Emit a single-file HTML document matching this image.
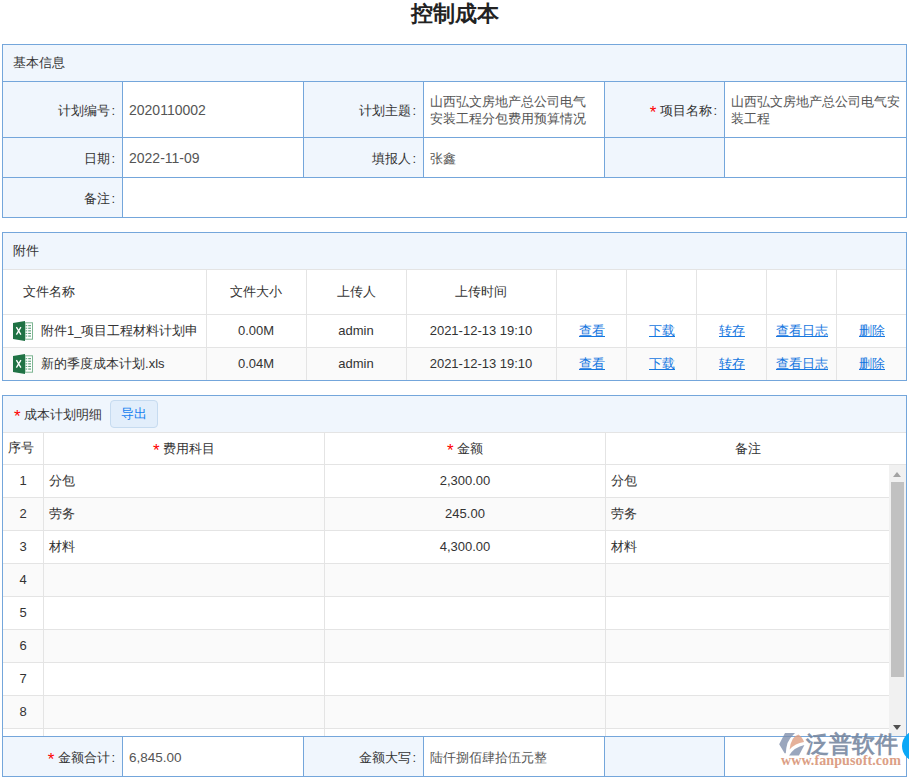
<!DOCTYPE html>
<html><head><meta charset="utf-8"><style>
html,body{margin:0;padding:0;background:#fff;}
body{width:909px;height:777px;position:relative;overflow:hidden;font-family:"Liberation Sans",sans-serif;font-size:13px;}
.a{position:absolute;}
.t{position:absolute;white-space:nowrap;line-height:17px;color:#333;}
.n{font-size:14px;}
.p2 .n{font-size:13px;}
.ft .n{font-size:13.5px;}
.co{margin-left:1.5px;}
.val{color:#555;}
.ml{line-height:17px;}
.st{color:#f00;font-size:17px;position:relative;top:3px;line-height:0;}
.title{font-size:22px;font-weight:bold;color:#222;line-height:26px;}
.lnk{color:#1677e0;text-decoration:underline;}
.btn{background:#e2eefb;border:1px solid #c6dbf0;border-radius:4px;box-sizing:border-box;}
.bt{color:#1480f0;}
.wm{opacity:.88;font-size:23px;color:#75869f;line-height:30px;font-weight:bold;}
.wmu{font-family:"Liberation Serif",serif;font-size:12.6px;color:#dc9f86;line-height:16px;letter-spacing:0.1px;font-weight:bold;}
</style></head>
<body>
<div class="t title" style="left:0px;width:909px;text-align:center;top:1px;">控制成本</div>
<div class="a" style="left:2px;top:44px;width:905px;height:174px;background:#fff;"></div>
<div class="a" style="left:2px;top:44px;width:905px;height:37px;background:#f0f6fd;"></div>
<div class="a" style="left:2px;top:81px;width:120px;height:56px;background:#f0f6fd;"></div>
<div class="a" style="left:303px;top:81px;width:120px;height:56px;background:#f0f6fd;"></div>
<div class="a" style="left:604px;top:81px;width:120px;height:56px;background:#f0f6fd;"></div>
<div class="a" style="left:2px;top:137px;width:120px;height:40px;background:#f0f6fd;"></div>
<div class="a" style="left:303px;top:137px;width:120px;height:40px;background:#f0f6fd;"></div>
<div class="a" style="left:604px;top:137px;width:120px;height:40px;background:#f0f6fd;"></div>
<div class="a" style="left:2px;top:177px;width:120px;height:40px;background:#f0f6fd;"></div>
<div class="a" style="left:2px;top:44px;width:905px;height:1px;background:#74a6db;"></div>
<div class="a" style="left:2px;top:81px;width:905px;height:1px;background:#74a6db;"></div>
<div class="a" style="left:2px;top:137px;width:905px;height:1px;background:#74a6db;"></div>
<div class="a" style="left:2px;top:177px;width:905px;height:1px;background:#74a6db;"></div>
<div class="a" style="left:2px;top:217px;width:905px;height:1px;background:#74a6db;"></div>
<div class="a" style="left:2px;top:44px;width:1px;height:174px;background:#74a6db;"></div>
<div class="a" style="left:906px;top:44px;width:1px;height:174px;background:#74a6db;"></div>
<div class="a" style="left:122px;top:81px;width:1px;height:97px;background:#74a6db;"></div>
<div class="a" style="left:303px;top:81px;width:1px;height:97px;background:#74a6db;"></div>
<div class="a" style="left:423px;top:81px;width:1px;height:97px;background:#74a6db;"></div>
<div class="a" style="left:604px;top:81px;width:1px;height:97px;background:#74a6db;"></div>
<div class="a" style="left:724px;top:81px;width:1px;height:97px;background:#74a6db;"></div>
<div class="a" style="left:122px;top:177px;width:1px;height:41px;background:#74a6db;"></div>
<div class="t lbl" style="left:13px;top:54px;">基本信息</div>
<div class="t lbl" style="right:794px;top:102px;">计划编号<span class="co">:</span></div>
<div class="t val" style="left:129px;top:102px;"><span class="n">2020110002</span></div>
<div class="t lbl" style="right:493px;top:102px;">计划主题<span class="co">:</span></div>
<div class="t val ml" style="left:430px;top:93px;">山西弘文房地产总公司电气<br>安装工程分包费用预算情况</div>
<div class="t lbl" style="right:192px;top:102px;"><span class="st">*</span> 项目名称<span class="co">:</span></div>
<div class="t val ml" style="left:731px;top:93px;">山西弘文房地产总公司电气安<br>装工程</div>
<div class="t lbl" style="right:794px;top:150px;">日期<span class="co">:</span></div>
<div class="t val" style="left:129px;top:150px;"><span class="n">2022-11-09</span></div>
<div class="t lbl" style="right:493px;top:150px;">填报人<span class="co">:</span></div>
<div class="t val" style="left:430px;top:150px;">张鑫</div>
<div class="t lbl" style="right:794px;top:190px;">备注<span class="co">:</span></div>
<div class="a" style="left:2px;top:232px;width:905px;height:149px;background:#fff;"></div>
<div class="a" style="left:2px;top:232px;width:905px;height:37px;background:#f0f6fd;"></div>
<div class="a" style="left:3px;top:347px;width:903px;height:33px;background:#fafafa;"></div>
<div class="a" style="left:3px;top:269px;width:903px;height:1px;background:#e4e4e4;"></div>
<div class="a" style="left:3px;top:314px;width:903px;height:1px;background:#e4e4e4;"></div>
<div class="a" style="left:3px;top:347px;width:903px;height:1px;background:#e4e4e4;"></div>
<div class="a" style="left:206px;top:270px;width:1px;height:110px;background:#e4e4e4;"></div>
<div class="a" style="left:306px;top:270px;width:1px;height:110px;background:#e4e4e4;"></div>
<div class="a" style="left:406px;top:270px;width:1px;height:110px;background:#e4e4e4;"></div>
<div class="a" style="left:556px;top:270px;width:1px;height:110px;background:#e4e4e4;"></div>
<div class="a" style="left:626px;top:270px;width:1px;height:110px;background:#e4e4e4;"></div>
<div class="a" style="left:696px;top:270px;width:1px;height:110px;background:#e4e4e4;"></div>
<div class="a" style="left:766px;top:270px;width:1px;height:110px;background:#e4e4e4;"></div>
<div class="a" style="left:836px;top:270px;width:1px;height:110px;background:#e4e4e4;"></div>
<div class="a" style="left:2px;top:232px;width:905px;height:1px;background:#74a6db;"></div>
<div class="a" style="left:2px;top:380px;width:905px;height:1px;background:#74a6db;"></div>
<div class="a" style="left:2px;top:232px;width:1px;height:149px;background:#74a6db;"></div>
<div class="a" style="left:906px;top:232px;width:1px;height:149px;background:#74a6db;"></div>
<div class="t lbl p2" style="left:13px;top:242px;">附件</div>
<div class="t lbl p2" style="left:23px;top:283px;">文件名称</div>
<div class="t lbl p2" style="left:206px;width:100px;text-align:center;top:283px;">文件大小</div>
<div class="t lbl p2" style="left:306px;width:100px;text-align:center;top:283px;">上传人</div>
<div class="t lbl p2" style="left:406px;width:150px;text-align:center;top:283px;">上传时间</div>
<svg class="a" style="left:13px;top:321px" width="20" height="20" viewBox="0 0 20 20"><rect x="12" y="1.8" width="7.5" height="16.4" fill="#fff" stroke="#7db592" stroke-width="1"/><rect x="12.6" y="4.1" width="1.6" height="1.1" fill="#2f8555" opacity=".75"/><rect x="15.2" y="4.1" width="2.8" height="1.1" fill="#2f8555" opacity=".8"/><rect x="12.6" y="6.7" width="1.6" height="1.1" fill="#2f8555" opacity=".75"/><rect x="15.2" y="6.7" width="2.8" height="1.1" fill="#2f8555" opacity=".8"/><rect x="12.6" y="9.3" width="1.6" height="1.1" fill="#2f8555" opacity=".75"/><rect x="15.2" y="9.3" width="2.8" height="1.1" fill="#2f8555" opacity=".8"/><rect x="12.6" y="11.9" width="1.6" height="1.1" fill="#2f8555" opacity=".75"/><rect x="15.2" y="11.9" width="2.8" height="1.1" fill="#2f8555" opacity=".8"/><rect x="12.6" y="14.5" width="1.6" height="1.1" fill="#2f8555" opacity=".75"/><rect x="15.2" y="14.5" width="2.8" height="1.1" fill="#2f8555" opacity=".8"/><path d="M0 2 L12 0 L12 20 L0 18 Z" fill="#1f7244"/><path d="M3.4 6.2 L7.9 13.6 M7.9 6.2 L3.4 13.6" stroke="#fff" stroke-width="1.35" fill="none"/></svg>
<div class="t lbl p2" style="left:41px;top:322px;">附件<span class="n">1</span>_项目工程材料计划申</div>
<div class="t lbl p2" style="left:206px;width:100px;text-align:center;top:322px;"><span class="n">0.00M</span></div>
<div class="t lbl p2" style="left:306px;width:100px;text-align:center;top:322px;"><span class="n">admin</span></div>
<div class="t lbl p2" style="left:406px;width:150px;text-align:center;top:322px;"><span class="n">2021-12-13 19:10</span></div>
<div class="t lnk p2" style="left:557px;width:70px;text-align:center;top:322px;">查看</div>
<div class="t lnk p2" style="left:627px;width:70px;text-align:center;top:322px;">下载</div>
<div class="t lnk p2" style="left:697px;width:70px;text-align:center;top:322px;">转存</div>
<div class="t lnk p2" style="left:767px;width:70px;text-align:center;top:322px;">查看日志</div>
<div class="t lnk p2" style="left:837px;width:70px;text-align:center;top:322px;">删除</div>
<svg class="a" style="left:13px;top:354px" width="20" height="20" viewBox="0 0 20 20"><rect x="12" y="1.8" width="7.5" height="16.4" fill="#fff" stroke="#7db592" stroke-width="1"/><rect x="12.6" y="4.1" width="1.6" height="1.1" fill="#2f8555" opacity=".75"/><rect x="15.2" y="4.1" width="2.8" height="1.1" fill="#2f8555" opacity=".8"/><rect x="12.6" y="6.7" width="1.6" height="1.1" fill="#2f8555" opacity=".75"/><rect x="15.2" y="6.7" width="2.8" height="1.1" fill="#2f8555" opacity=".8"/><rect x="12.6" y="9.3" width="1.6" height="1.1" fill="#2f8555" opacity=".75"/><rect x="15.2" y="9.3" width="2.8" height="1.1" fill="#2f8555" opacity=".8"/><rect x="12.6" y="11.9" width="1.6" height="1.1" fill="#2f8555" opacity=".75"/><rect x="15.2" y="11.9" width="2.8" height="1.1" fill="#2f8555" opacity=".8"/><rect x="12.6" y="14.5" width="1.6" height="1.1" fill="#2f8555" opacity=".75"/><rect x="15.2" y="14.5" width="2.8" height="1.1" fill="#2f8555" opacity=".8"/><path d="M0 2 L12 0 L12 20 L0 18 Z" fill="#1f7244"/><path d="M3.4 6.2 L7.9 13.6 M7.9 6.2 L3.4 13.6" stroke="#fff" stroke-width="1.35" fill="none"/></svg>
<div class="t lbl p2" style="left:41px;top:355px;">新的季度成本计划.<span class="n">xls</span></div>
<div class="t lbl p2" style="left:206px;width:100px;text-align:center;top:355px;"><span class="n">0.04M</span></div>
<div class="t lbl p2" style="left:306px;width:100px;text-align:center;top:355px;"><span class="n">admin</span></div>
<div class="t lbl p2" style="left:406px;width:150px;text-align:center;top:355px;"><span class="n">2021-12-13 19:10</span></div>
<div class="t lnk p2" style="left:557px;width:70px;text-align:center;top:355px;">查看</div>
<div class="t lnk p2" style="left:627px;width:70px;text-align:center;top:355px;">下载</div>
<div class="t lnk p2" style="left:697px;width:70px;text-align:center;top:355px;">转存</div>
<div class="t lnk p2" style="left:767px;width:70px;text-align:center;top:355px;">查看日志</div>
<div class="t lnk p2" style="left:837px;width:70px;text-align:center;top:355px;">删除</div>
<div class="a" style="left:2px;top:395px;width:905px;height:382px;background:#fff;"></div>
<div class="a" style="left:2px;top:395px;width:905px;height:37px;background:#f0f6fd;"></div>
<div class="a" style="left:3px;top:498px;width:886px;height:32px;background:#fafafa;"></div>
<div class="a" style="left:3px;top:564px;width:886px;height:32px;background:#fafafa;"></div>
<div class="a" style="left:3px;top:630px;width:886px;height:32px;background:#fafafa;"></div>
<div class="a" style="left:3px;top:696px;width:886px;height:32px;background:#fafafa;"></div>
<div class="a" style="left:3px;top:464px;width:886px;height:1px;background:#e4e4e4;"></div>
<div class="a" style="left:3px;top:497px;width:886px;height:1px;background:#e4e4e4;"></div>
<div class="a" style="left:3px;top:530px;width:886px;height:1px;background:#e4e4e4;"></div>
<div class="a" style="left:3px;top:563px;width:886px;height:1px;background:#e4e4e4;"></div>
<div class="a" style="left:3px;top:596px;width:886px;height:1px;background:#e4e4e4;"></div>
<div class="a" style="left:3px;top:629px;width:886px;height:1px;background:#e4e4e4;"></div>
<div class="a" style="left:3px;top:662px;width:886px;height:1px;background:#e4e4e4;"></div>
<div class="a" style="left:3px;top:695px;width:886px;height:1px;background:#e4e4e4;"></div>
<div class="a" style="left:3px;top:728px;width:886px;height:1px;background:#e4e4e4;"></div>
<div class="a" style="left:3px;top:432px;width:903px;height:1px;background:#e4e4e4;"></div>
<div class="a" style="left:3px;top:464px;width:903px;height:1px;background:#e4e4e4;"></div>
<div class="a" style="left:43px;top:433px;width:1px;height:303px;background:#e4e4e4;"></div>
<div class="a" style="left:324px;top:433px;width:1px;height:303px;background:#e4e4e4;"></div>
<div class="a" style="left:605px;top:433px;width:1px;height:303px;background:#e4e4e4;"></div>
<div class="a" style="left:889px;top:465px;width:17px;height:271px;background:#f1f1f1;"></div>
<div class="a" style="left:891px;top:482px;width:13px;height:195px;background:#c1c1c1;"></div>
<div class="a" style="left:893px;top:472px;width:0;height:0;border-left:4.5px solid transparent;border-right:4.5px solid transparent;border-bottom:5px solid #a3a3a3"></div>
<div class="a" style="left:893px;top:725px;width:0;height:0;border-left:4.5px solid transparent;border-right:4.5px solid transparent;border-top:5px solid #505050"></div>
<div class="a" style="left:2px;top:736px;width:905px;height:40px;background:#fff;"></div>
<div class="a" style="left:2px;top:736px;width:120px;height:40px;background:#f0f6fd;"></div>
<div class="a" style="left:303px;top:736px;width:120px;height:40px;background:#f0f6fd;"></div>
<div class="a" style="left:604px;top:736px;width:120px;height:40px;background:#f0f6fd;"></div>
<div class="a" style="left:2px;top:736px;width:905px;height:1px;background:#74a6db;"></div>
<div class="a" style="left:122px;top:736px;width:1px;height:41px;background:#74a6db;"></div>
<div class="a" style="left:303px;top:736px;width:1px;height:41px;background:#74a6db;"></div>
<div class="a" style="left:423px;top:736px;width:1px;height:41px;background:#74a6db;"></div>
<div class="a" style="left:604px;top:736px;width:1px;height:41px;background:#74a6db;"></div>
<div class="a" style="left:724px;top:736px;width:1px;height:41px;background:#74a6db;"></div>
<div class="a" style="left:2px;top:395px;width:905px;height:1px;background:#74a6db;"></div>
<div class="a" style="left:2px;top:776px;width:905px;height:1px;background:#74a6db;"></div>
<div class="a" style="left:2px;top:395px;width:1px;height:382px;background:#74a6db;"></div>
<div class="a" style="left:906px;top:395px;width:1px;height:382px;background:#74a6db;"></div>
<div class="t lbl" style="left:14px;top:406px;"><span class="st">*</span> 成本计划明细</div>
<div class="a btn" style="left:110px;top:400px;width:48px;height:28px"></div>
<div class="t bt" style="left:121px;top:405px;">导出</div>
<div class="t lbl" style="left:8px;top:439px;">序号</div>
<div class="t lbl" style="left:44px;width:280px;text-align:center;top:440px;"><span class="st">*</span> 费用科目</div>
<div class="t lbl" style="left:325px;width:280px;text-align:center;top:440px;"><span class="st">*</span> 金额</div>
<div class="t lbl" style="left:606px;width:283px;text-align:center;top:440px;">备注</div>
<div class="t lbl p2" style="left:3px;width:40px;text-align:center;top:472px;"><span class="n">1</span></div>
<div class="t lbl" style="left:49px;top:472px;">分包</div>
<div class="t lbl p2" style="left:325px;width:280px;text-align:center;top:472px;"><span class="n">2,300.00</span></div>
<div class="t lbl" style="left:611px;top:472px;">分包</div>
<div class="t lbl p2" style="left:3px;width:40px;text-align:center;top:505px;"><span class="n">2</span></div>
<div class="t lbl" style="left:49px;top:505px;">劳务</div>
<div class="t lbl p2" style="left:325px;width:280px;text-align:center;top:505px;"><span class="n">245.00</span></div>
<div class="t lbl" style="left:611px;top:505px;">劳务</div>
<div class="t lbl p2" style="left:3px;width:40px;text-align:center;top:538px;"><span class="n">3</span></div>
<div class="t lbl" style="left:49px;top:538px;">材料</div>
<div class="t lbl p2" style="left:325px;width:280px;text-align:center;top:538px;"><span class="n">4,300.00</span></div>
<div class="t lbl" style="left:611px;top:538px;">材料</div>
<div class="t lbl p2" style="left:3px;width:40px;text-align:center;top:571px;"><span class="n">4</span></div>
<div class="t lbl p2" style="left:3px;width:40px;text-align:center;top:604px;"><span class="n">5</span></div>
<div class="t lbl p2" style="left:3px;width:40px;text-align:center;top:637px;"><span class="n">6</span></div>
<div class="t lbl p2" style="left:3px;width:40px;text-align:center;top:670px;"><span class="n">7</span></div>
<div class="t lbl p2" style="left:3px;width:40px;text-align:center;top:703px;"><span class="n">8</span></div>
<div class="t lbl" style="right:794px;top:749px;"><span class="st">*</span> 金额合计<span class="co">:</span></div>
<div class="t val ft" style="left:129px;top:749px;"><span class="n">6,845.00</span></div>
<div class="t lbl" style="right:493px;top:749px;">金额大写<span class="co">:</span></div>
<div class="t val" style="left:430px;top:749px;">陆仟捌佰肆拾伍元整</div>
<svg class="a" style="left:772px;top:726px;opacity:.85" width="40" height="36" viewBox="0 0 40 36">
<path d="M13 7 L23 7 Q17.5 12 15.5 17 Q14 22 13.8 27.3 L12.6 27.3 L7.2 18.3 Z" fill="#7f8eab" opacity=".92"/>
<path d="M17.6 23.4 Q19 10.5 26.4 8.4 Q30.5 11 32 16 Q23 17.5 17.6 23.4 Z" fill="#df9f83" opacity=".95"/>
<path d="M17.1 29.4 L26.9 29.4 L32.4 19 Q22.5 21 17.1 29.4 Z" fill="#7f8eab" opacity=".92"/>
</svg>
<div class="t wm" style="left:806px;top:729px;">泛普软件</div>
<div class="t wmu" style="left:781px;top:753px;"><span class="n">www.fanpusoft.com</span></div>
<div class="a" style="left:902px;top:730px;width:32px;height:32px;border-radius:50%;background:#0aa8f7"></div>
</body></html>
